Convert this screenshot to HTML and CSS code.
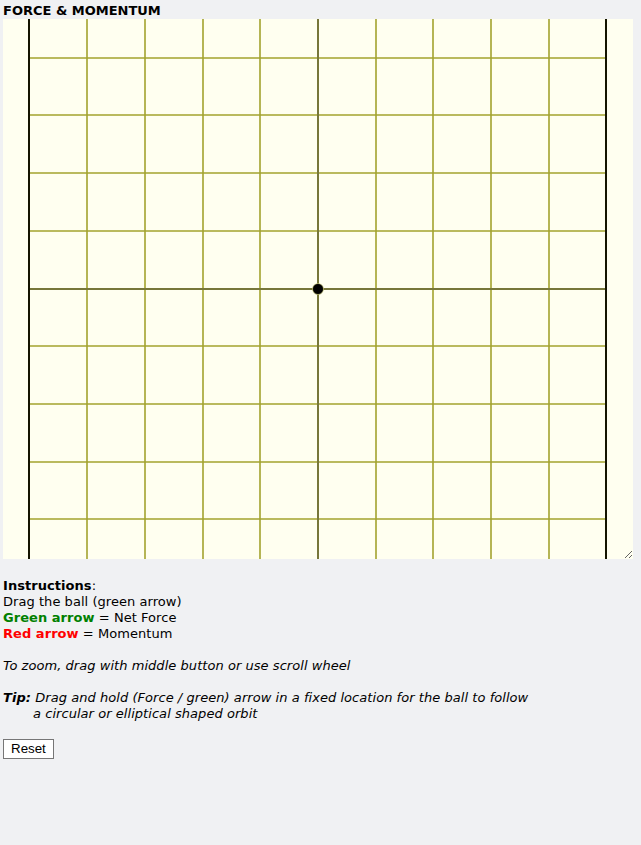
FILE: index.html
```html
<!DOCTYPE html>
<html>
<head>
<meta charset="utf-8">
<title>Force &amp; Momentum</title>
<link rel="stylesheet" href="styles.css">
</head>
<body>
<div class="title">FORCE &amp; MOMENTUM</div>
<div class="board">
  <svg class="grid" width="630" height="540" viewBox="0 0 630 540">
    <g class="hlines">
      <line x1="26" y1="39" x2="603" y2="39"/>
      <line x1="26" y1="96" x2="603" y2="96"/>
      <line x1="26" y1="154" x2="603" y2="154"/>
      <line x1="26" y1="212" x2="603" y2="212"/>
      <line x1="26" y1="327" x2="603" y2="327"/>
      <line x1="26" y1="385" x2="603" y2="385"/>
      <line x1="26" y1="443" x2="603" y2="443"/>
      <line x1="26" y1="500" x2="603" y2="500"/>
    </g>
    <g class="vlines">
      <line x1="84" y1="0" x2="84" y2="540"/>
      <line x1="142" y1="0" x2="142" y2="540"/>
      <line x1="200" y1="0" x2="200" y2="540"/>
      <line x1="257" y1="0" x2="257" y2="540"/>
      <line x1="373" y1="0" x2="373" y2="540"/>
      <line x1="430" y1="0" x2="430" y2="540"/>
      <line x1="488" y1="0" x2="488" y2="540"/>
      <line x1="546" y1="0" x2="546" y2="540"/>
    </g>
    <g class="axes">
      <line x1="26" y1="270" x2="603" y2="270"/>
      <line x1="315" y1="0" x2="315" y2="540"/>
    </g>
    <g class="bounds">
      <line x1="26" y1="0" x2="26" y2="540"/>
      <line x1="603" y1="0" x2="603" y2="540"/>
    </g>
    <circle class="ball" cx="315" cy="270" r="5.5"/>
  </svg>
</div>
<div class="instructions">
  <div><b>Instructions</b>:</div>
  <div>Drag the ball (green arrow)</div>
  <div><b class="green">Green arrow</b> = Net Force</div>
  <div><b class="red">Red arrow</b> = Momentum</div>
  <div class="gap"><i>To zoom, drag with middle button or use scroll wheel</i></div>
  <div class="gap tip"><i><b>Tip:</b> Drag and hold (Force / green) arrow in a fixed location for the ball to follow a circular or elliptical shaped orbit</i></div>
</div>
<button class="reset" type="button">Reset</button>
</body>
</html>
```

FILE: styles.css
```css
html {
  background: #f0f1f3;
}
body {
  margin: 3px;
  font-family: Verdana, "DejaVu Sans", sans-serif;
  font-size: 13px;
  line-height: 16px;
  color: #000;
}
.title {
  font-weight: bold;
}
.board {
  width: 630px;
  height: 540px;
  background: #fffff0;
  resize: both;
  overflow: hidden;
}
.grid {
  display: block;
}
.hlines line,
.vlines line {
  stroke: #a3a32e;
  stroke-width: 1.6;
}
.axes line {
  stroke: #77773a;
  stroke-width: 2;
}
.bounds line {
  stroke: #141400;
  stroke-width: 2;
}
.ball {
  fill: #000;
  stroke: #e8e890;
  stroke-width: 0.6;
}
.instructions {
  margin-top: 19px;
  letter-spacing: 0.05px;
}
.gap {
  margin-top: 16px;
}
.tip {
  width: 500px;
  padding-left: 30px;
  text-indent: -30px;
}
.green {
  color: #008000;
}
.red {
  color: #ff0000;
}
.reset {
  display: block;
  margin-top: 17px;
  font-family: Arial, "Liberation Sans", sans-serif;
  font-size: 13.33px;
  line-height: 16px;
  padding: 1px 7px;
  background: #fff;
  color: #000;
  border: 1px solid #767676;
  border-radius: 0;
}
```
